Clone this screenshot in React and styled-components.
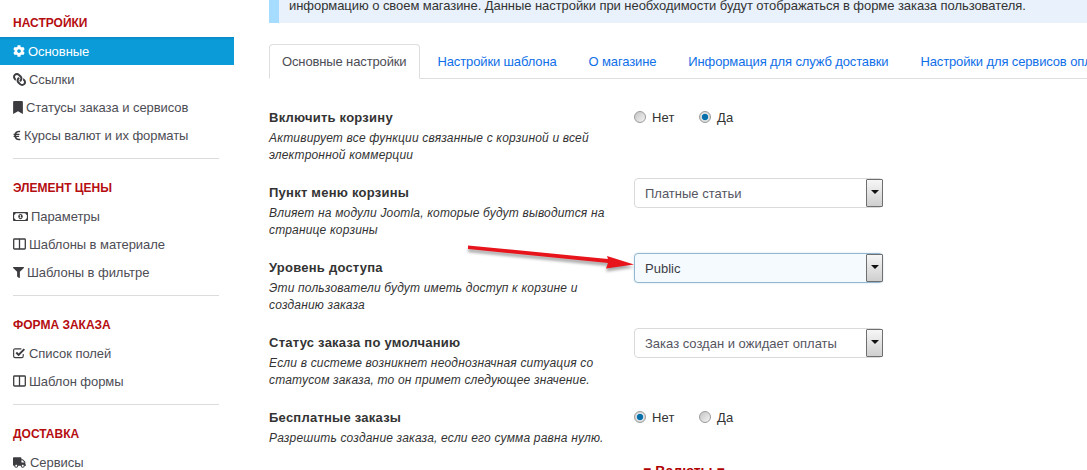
import React from "react";
import styled, { createGlobalStyle } from "styled-components";
import { FaCog, FaLink, FaBookmark, FaEuroSign, FaFilter, FaTruck, FaRegMoneyBillAlt } from "react-icons/fa";

const Global = createGlobalStyle`
  html, body { margin: 0; padding: 0; background: #fff; }
  body { font-family: "Liberation Sans", Arial, sans-serif; overflow: hidden; }
`;
const Page = styled.div`
  display: flex; width: 1087px; height: 470px; overflow: hidden; background: #fff;
  position: relative;
`;
const Sidebar = styled.nav`
  width: 234px; flex: none; padding-top: 14px; box-sizing: border-box;
`;
const Heading = styled.h3`
  margin: 0; padding-left: 13px; height: 23px; line-height: 18px;
  font-size: 12px; font-weight: bold; color: #b50d10; text-transform: uppercase;
`;
const NavItem = styled.a`
  display: flex; align-items: center; height: 28px; padding-left: 13px;
  font-size: 13px; letter-spacing: -0.06px; color: ${p => (p.$active ? "#fff" : "#4d4d55")};
  background: ${p => (p.$active ? "linear-gradient(#0788c4 0, #0a9bd8 3px)" : "transparent")};
`;
const IconSlot = styled.span`
  display: inline-flex; align-items: center; justify-content: flex-start;
  width: ${p => p.$w}px; margin-right: 3px; flex: none;
  color: ${p => (p.$active ? "#fff" : "#3c3c40")};
  font-size: ${p => p.$s || 12}px;
  transform: ${p => (p.$flip ? "scaleX(-1)" : "none")};
`;
const Divider = styled.hr`
  border: 0; border-top: 1px solid #dcdcdc; margin: 9px 15px 20px 13px; height: 0;
`;
const Main = styled.main`
  flex: 1; min-width: 0; padding-left: 35px;
`;
const Banner = styled.div`
  height: 23px; box-sizing: border-box; background: #e9f2fc; border-left: 10px solid #a6dcff;
  padding-left: 10px; line-height: 11px; font-size: 13px; letter-spacing: -0.06px; color: #333;
  white-space: nowrap; overflow: hidden;
`;
const Tabs = styled.div`
  display: flex; margin-top: 21px; height: 35px; border-bottom: 1px solid #dedede;
  white-space: nowrap; box-sizing: border-box;
`;
const Tab = styled.a`
  flex: none; box-sizing: border-box; height: ${p => (p.$active ? "35px" : "34px")};
  padding: 0 ${p => (p.$active ? "12px" : "14px")} 0 ${p => (p.$active ? "12px" : "18px")};
  line-height: 35px; font-size: 13px; letter-spacing: -0.13px;
  color: ${p => (p.$active ? "#4d4d55" : "#0f6fe8")};
  ${p => p.$active && `
    background: #fff; border: 1px solid #dedede; border-bottom: 1px solid #fff; border-radius: 4px 4px 0 0;
    line-height: 33px;
  `}
`;
const Form = styled.div` margin-top: 24px; `;
const Row = styled.div`
  display: grid; grid-template-columns: 365px 249px; height: 75px;
`;
const Label = styled.div`
  padding-top: 6px; line-height: 18px; height: 21px; font-size: 13px; font-weight: bold;
  letter-spacing: 0.24px; color: #333;
`;
const Hint = styled.div`
  width: 340px; font-size: 12px; line-height: 17px; font-style: italic; color: #333;
  letter-spacing: 0.18px;
`;
const Radios = styled.div`
  display: flex; align-items: center; height: 16px; padding-top: 6px;
`;
const Radio = styled.span`
  width: 12px; height: 12px; border-radius: 50%; flex: none; box-sizing: border-box;
  border: 1px solid #9a9a9a; margin-right: 6px;
  background: ${p => p.$on
    ? "radial-gradient(circle, #0a6ea8 0 2.6px, #1b93c9 3px, #e2e2e2 3.6px, #cfcfcf 100%)"
    : "linear-gradient(135deg, #c4c4c4, #f4f4f4)"};
`;
const RadioText = styled.span`
  font-size: 13px; color: #333; letter-spacing: 0.1px; width: ${p => p.$w}px; flex: none;
`;
const Select = styled.div`
  width: 249px; height: 30px; box-sizing: border-box; display: flex; align-items: center;
  border: 1px solid ${p => (p.$focus ? "#94b8cf" : "#dadada")}; border-radius: 4px;
  background: ${p => (p.$focus ? "#f5fafe" : "#fff")};
  padding: 0 0 0 10px; font-size: 13px; color: ${p => (p.$focus ? "#3c3c44" : "#55555f")};
  box-shadow: ${p => (p.$focus ? "0 0 2px rgba(120,170,200,.4)" : "none")};
`;
const SelectValue = styled.span` flex: 1; `;
const SelectButton = styled.span`
  width: 17px; height: 28px; flex: none; box-sizing: border-box; display: flex;
  align-items: center; justify-content: center; margin-right: -1px;
  border: 1px solid #6f6f6f; border-radius: 1px; background: linear-gradient(#f6f6f6, #cfcfcf);
  &::after {
    content: ""; width: 0; height: 0; margin-top: -2px;
    border-left: 4px solid transparent; border-right: 4px solid transparent; border-top: 4px solid #111;
  }
`;
const Section = styled.div`
  margin-top: -15px; padding-left: 374px; font-size: 14px; font-weight: bold; color: #b00000;
  white-space: nowrap; line-height: 16px;
`;
const Arrow = styled.svg`
  position: absolute; left: 460px; top: 235px; width: 185px; height: 45px; overflow: visible;
`;

const ColumnsIcon = () => (
  <svg width="13" height="12" viewBox="0 0 13 12" fill="none" stroke="currentColor" strokeWidth="1.3">
    <rect x="0.7" y="1" width="11.6" height="10" rx="0.8" />
    <path d="M6.5 1V11" />
  </svg>
);
const CheckIcon = () => (
  <svg width="14" height="12" viewBox="0 0 14 12" fill="none" stroke="currentColor">
    <path d="M11 7V9.5a1.5 1.5 0 0 1-1.5 1.5H2.2A1.5 1.5 0 0 1 .7 9.5V3A1.5 1.5 0 0 1 2.2 1.5H9" strokeWidth="1.2" />
    <path d="M3.5 5.5L6 8L12.2 1.8" strokeWidth="2.2" />
  </svg>
);

const Item = ({ icon: I, w, s, flip, active, children }) => (
  <NavItem $active={active}>
    <IconSlot $w={w} $s={s} $flip={flip} $active={active}><I /></IconSlot>
    {children}
  </NavItem>
);

const Sel = ({ focus, children }) => (
  <Select $focus={focus}>
    <SelectValue>{children}</SelectValue>
    <SelectButton />
  </Select>
);

const Yes = ({ first }) => (
  <Radios>
    <Radio $on={first} /><RadioText $w={47}>Нет</RadioText>
    <Radio $on={!first} /><RadioText $w={30}>Да</RadioText>
  </Radios>
);

export default function App() {
  return (
    <Page>
      <Global />
      <Sidebar>
        <Heading>Настройки</Heading>
        <Item icon={FaCog} w={12} s={12} active>Основные</Item>
        <Item icon={FaLink} w={13} s={13} flip>Ссылки</Item>
        <Item icon={FaBookmark} w={10} s={13}>Статусы заказа и сервисов</Item>
        <Item icon={FaEuroSign} w={8} s={11}>Курсы валют и их форматы</Item>
        <Divider />
        <Heading>Элемент цены</Heading>
        <Item icon={FaRegMoneyBillAlt} w={15} s={15}>Параметры</Item>
        <Item icon={ColumnsIcon} w={13}>Шаблоны в материале</Item>
        <Item icon={FaFilter} w={11} s={11}>Шаблоны в фильтре</Item>
        <Divider />
        <Heading>Форма заказа</Heading>
        <Item icon={CheckIcon} w={13}>Список полей</Item>
        <Item icon={ColumnsIcon} w={13}>Шаблон формы</Item>
        <Divider />
        <Heading>Доставка</Heading>
        <Item icon={FaTruck} w={14} s={13}>Сервисы</Item>
      </Sidebar>
      <Main>
        <Banner>информацию о своем магазине. Данные настройки при необходимости будут отображаться в форме заказа пользователя.</Banner>
        <Tabs>
          <Tab $active>Основные настройки</Tab>
          <Tab>Настройки шаблона</Tab>
          <Tab>О магазине</Tab>
          <Tab>Информация для служб доставки</Tab>
          <Tab>Настройки для сервисов оплаты</Tab>
        </Tabs>
        <Form>
          <Row>
            <div><Label>Включить корзину</Label><Hint>Активирует все функции связанные с корзиной и всей электронной коммерции</Hint></div>
            <Yes />
          </Row>
          <Row>
            <div><Label>Пункт меню корзины</Label><Hint>Влияет на модули Joomla, которые будут выводится на странице корзины</Hint></div>
            <Sel>Платные статьи</Sel>
          </Row>
          <Row>
            <div><Label>Уровень доступа</Label><Hint>Эти пользователи будут иметь доступ к корзине и созданию заказа</Hint></div>
            <Sel focus>Public</Sel>
          </Row>
          <Row>
            <div><Label>Статус заказа по умолчанию</Label><Hint>Если в системе возникнет неоднозначная ситуация со статусом заказа, то он примет следующее значение.</Hint></div>
            <Sel>Заказ создан и ожидает оплаты</Sel>
          </Row>
          <Row>
            <div><Label>Бесплатные заказы</Label><Hint>Разрешить создание заказа, если его сумма равна нулю.</Hint></div>
            <Yes first />
          </Row>
          <Section>■ Валюты ■</Section>
        </Form>
      </Main>
      <Arrow viewBox="0 0 185 45">
        <defs>
          <filter id="arrowShadow" x="-10%" y="-50%" width="120%" height="200%">
            <feGaussianBlur stdDeviation="1.5" />
          </filter>
        </defs>
        <path d="M8 10.5 L148 24 L147 21 L174 29.5 L146 33.5 L148 28 L8 14 Z" fill="#000" opacity=".35" filter="url(#arrowShadow)" transform="translate(0 3)" />
        <path d="M8 10.5 L148 24 L147 21 L174 29.5 L146 33.5 L148 28 L8 14 Z" fill="#e8141c" />
      </Arrow>
    </Page>
  );
}
